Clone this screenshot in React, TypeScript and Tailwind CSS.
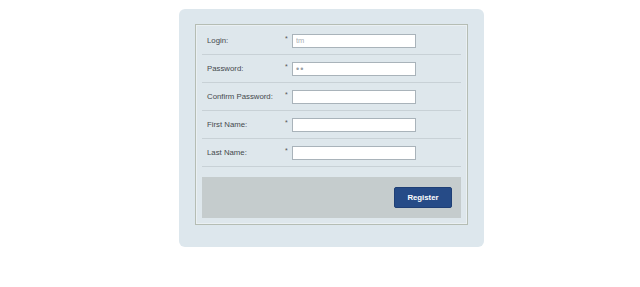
export default function App() {
  const rows = [
    { label: 'Login:', type: 'text', value: 'tm' },
    { label: 'Password:', type: 'password', value: 'ab' },
    { label: 'Confirm Password:', type: 'password', value: '' },
    { label: 'First Name:', type: 'text', value: '' },
    { label: 'Last Name:', type: 'text', value: '' },
  ];

  return (
    <div className="w-[640px] h-[287px] bg-white pt-[9px] font-['Liberation_Sans',Arial,sans-serif]">
      <div className="ml-[179px] w-[305px] h-[238px] rounded-[6px] bg-[#dde7ed] pl-[16px] pt-[15px]">
        <div className="w-[273px] h-[201px] border border-[#b5bdb4] bg-[#dee7ec] px-[6px] pt-[2px] shadow-[inset_0_0_0_1px_#eaf0f3]">
          {rows.map((r) => (
            <div
              key={r.label}
              className="flex h-[28px] items-center border-b border-[#c8d1d6] pl-[5px]"
            >
              <span className="w-[78px] text-[7.8px] text-[#45494d]">{r.label}</span>
              <span className="w-[7px] text-[7px] text-[#555] -mt-[3px]">*</span>
              <input
                type={r.type}
                defaultValue={r.value}
                className={
                  r.type === 'password'
                    ? 'w-[124px] h-[14px] border border-[#a9b3ba] bg-white px-[3px] text-[9px] tracking-[1px] text-[#9aa1a6] outline-none'
                    : 'w-[124px] h-[14px] border border-[#a9b3ba] bg-white px-[3px] text-[7.5px] text-[#aab0b5] outline-none'
                }
              />
            </div>
          ))}
          <div className="mt-[10px] flex h-[41px] items-center justify-end bg-[#c5cccd] pr-[9px]">
            <button className="w-[58px] h-[21px] rounded-[2px] border border-[#1f3f75] bg-[#264b87] text-[7.8px] font-semibold text-white">
              Register
            </button>
          </div>
        </div>
      </div>
    </div>
  );
}
